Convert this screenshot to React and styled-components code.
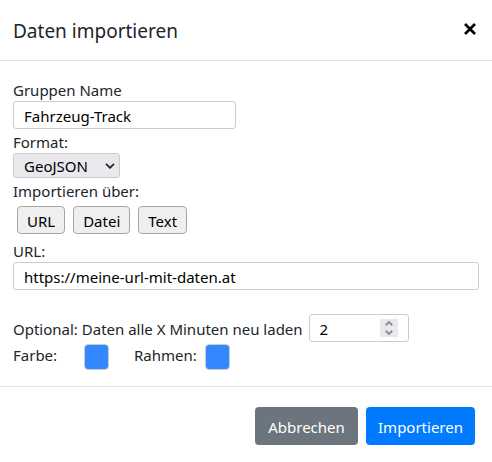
import React, { useRef, useState } from "react";
import styled, { createGlobalStyle } from "styled-components";

const GlobalStyle = createGlobalStyle`
  *, *::before, *::after { box-sizing: border-box; }
  body {
    margin: 0;
    background: #fff;
    color: #212529;
    font: 15px/22px "Segoe UI", "Noto Sans", "Open Sans", sans-serif;
  }
  input, select, button { font: inherit; }
`;

const Dialog = styled.form`
  display: flex;
  flex-direction: column;
  background: #fff;
`;

const Header = styled.header`
  display: flex;
  align-items: flex-start;
  justify-content: space-between;
  padding: 17px 13px 15px;
  border-bottom: 1px solid #dee2e6;
`;

const Title = styled.h1`
  margin: 0;
  font-size: 19px;
  font-weight: 400;
  line-height: 28px;
`;

const CloseButton = styled.button`
  display: flex;
  padding: 6px 3px;
  border: 0;
  background: none;
  color: #000;
  cursor: pointer;
`;

const Body = styled.div`
  display: flex;
  flex-direction: column;
  gap: 2px;
  padding: 18px 13px 16px;
`;

const Field = styled.div`
  display: flex;
  flex-direction: column;
  align-items: flex-start;
`;

const UrlField = styled(Field)`
  margin: 4px 0 22px;
`;

const TextInput = styled.input`
  width: ${(p) => p.$width || "100%"};
  max-width: 100%;
  height: 28px;
  padding: 1px 10px 0;
  border: 1px solid #ccc;
  border-radius: 3px;
  background: #fff;
  color: #000;
  outline: none;
`;

const SelectWrap = styled.div`
  display: grid;
  align-items: center;
  width: 107px;

  > * { grid-area: 1 / 1; }
  > svg { justify-self: end; margin-right: 5px; pointer-events: none; }
`;

const Select = styled.select`
  appearance: none;
  width: 100%;
  height: 25px;
  padding: 0 10px;
  border: 1px solid #ccc;
  border-radius: 3px;
  background: #e9e9ed;
  color: #000;
`;

const Choices = styled.div`
  display: flex;
  gap: 8px;
  padding: 4px 4px 0;
`;

const ChoiceButton = styled.button`
  height: 28px;
  padding: 2px 9px 0;
  border: 1px solid #a6a6a6;
  border-radius: 4px;
  background: #efefef;
  color: #000;
  cursor: pointer;
`;

const ReloadRow = styled.div`
  display: flex;
  align-items: center;
  gap: 6px;

  > label { padding-top: 2px; white-space: nowrap; }
`;

const NumberBox = styled.div`
  display: flex;
  align-items: center;
  width: 100px;
  height: 28px;
  padding: 0 10px;
  border: 1px solid #ccc;
  border-radius: 3px;
`;

const NumberInput = styled.input`
  appearance: textfield;
  flex: 1;
  min-width: 0;
  padding: 2px 0 0;
  border: 0;
  background: none;
  color: #000;
  outline: none;

  &::-webkit-inner-spin-button { appearance: none; margin: 0; }
`;

const Spinner = styled.div`
  display: flex;
  flex-direction: column;
  width: 18px;
  height: 18px;
  background: #e9e9ed;
`;

const SpinButton = styled.button`
  display: flex;
  flex: 1;
  align-items: center;
  justify-content: center;
  min-height: 0;
  padding: 0;
  border: 0;
  background: none;
  color: #8f8f9d;
`;

const ColorRow = styled.div`
  display: flex;
  gap: 25px;
`;

const ColorField = styled.label`
  display: flex;
  align-items: flex-start;
  justify-content: space-between;
  width: 96px;
`;

const ColorInput = styled.input`
  appearance: none;
  width: 25px;
  height: 26px;
  padding: 0;
  border: 1px solid #ccc;
  border-radius: 4px;
  overflow: hidden;
  background: #38f;

  &::-webkit-color-swatch-wrapper { padding: 0; }
  &::-webkit-color-swatch { border: 0; }
`;

const Footer = styled.footer`
  display: flex;
  justify-content: flex-end;
  gap: 8px;
  padding: 20px 17px 17px;
  border-top: 1px solid #dee2e6;
`;

const ActionButton = styled.button`
  min-width: 103px;
  height: 38px;
  padding: 2px 12px 0;
  border: 0;
  border-radius: 4px;
  background: ${(p) => (p.$primary ? "#007bff" : "#6c757d")};
  color: #fff;
  cursor: pointer;
`;

const Chevron = ({ up, width = 8, stroke = 2 }) => (
  <svg width={width} height={width / 2 + 1} viewBox="0 0 8 5" fill="none" stroke="currentColor" strokeWidth={stroke} aria-hidden="true">
    <path d={up ? "M.7 4.3 4 1l3.3 3.3" : "M.7.7 4 4 7.3.7"} />
  </svg>
);

export default function App() {
  const [minutes, setMinutes] = useState("2");
  const minutesRef = useRef(null);
  const step = (delta) => {
    setMinutes(String(Math.max(0, Number(minutes) + delta)));
    minutesRef.current.focus();
  };

  return (
    <>
      <GlobalStyle />
      <Dialog onSubmit={(e) => e.preventDefault()}>
        <Header>
          <Title>Daten importieren</Title>
          <CloseButton type="button" aria-label="Schließen">
            <svg width="12" height="12" viewBox="0 0 12 12" fill="none" stroke="currentColor" strokeWidth="2.7" aria-hidden="true">
              <path d="M1 1l10 10M11 1 1 11" />
            </svg>
          </CloseButton>
        </Header>
        <Body>
          <Field>
            <label htmlFor="group">Gruppen Name</label>
            <TextInput id="group" $width="223px" defaultValue="Fahrzeug-Track" />
          </Field>
          <Field>
            <label htmlFor="format">Format:</label>
            <SelectWrap>
              <Select id="format" defaultValue="GeoJSON">
                <option>GeoJSON</option>
              </Select>
              <Chevron width={10} stroke={1.5} />
            </SelectWrap>
          </Field>
          <Field role="group" aria-labelledby="source">
            <span id="source">Importieren über:</span>
            <Choices>
              <ChoiceButton type="button">URL</ChoiceButton>
              <ChoiceButton type="button">Datei</ChoiceButton>
              <ChoiceButton type="button">Text</ChoiceButton>
            </Choices>
          </Field>
          <UrlField>
            <label htmlFor="url">URL:</label>
            <TextInput id="url" type="url" defaultValue="https://meine-url-mit-daten.at" />
          </UrlField>
          <ReloadRow>
            <label htmlFor="minutes">Optional: Daten alle X Minuten neu laden</label>
            <NumberBox>
              <NumberInput id="minutes" ref={minutesRef} type="number" min="0" value={minutes} onChange={(e) => setMinutes(e.target.value)} />
              <Spinner>
                <SpinButton type="button" aria-label="Erhöhen" onClick={() => step(1)}>
                  <Chevron up />
                </SpinButton>
                <SpinButton type="button" aria-label="Verringern" onClick={() => step(-1)}>
                  <Chevron />
                </SpinButton>
              </Spinner>
            </NumberBox>
          </ReloadRow>
          <ColorRow>
            <ColorField>
              Farbe:
              <ColorInput type="color" defaultValue="#3388ff" />
            </ColorField>
            <ColorField>
              Rahmen:
              <ColorInput type="color" defaultValue="#3388ff" />
            </ColorField>
          </ColorRow>
        </Body>
        <Footer>
          <ActionButton type="button">Abbrechen</ActionButton>
          <ActionButton type="submit" $primary>Importieren</ActionButton>
        </Footer>
      </Dialog>
    </>
  );
}
